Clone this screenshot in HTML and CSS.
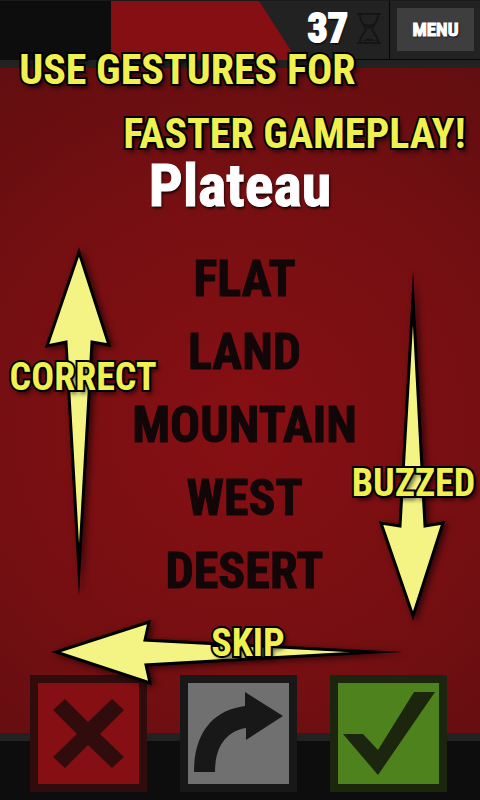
FILE: index.html
```html
<!DOCTYPE html>
<html lang="en">
<head>
<meta charset="utf-8">
<meta name="viewport" content="width=device-width, initial-scale=1">
<title>Plateau</title>
<link rel="stylesheet" href="styles.css">
</head>
<body>
<div class="game">
  <header class="topbar">
    <div class="progress"></div>
    <div class="timer">
      <span class="seconds">37</span>
      <svg class="hourglass" viewBox="0 0 26 34" aria-hidden="true">
        <path d="M1 2H25M1 31H25M4 3C4 11 10 14 10 17S4 23 4 30M22 3C22 11 16 14 16 17S22 23 22 30" fill="none" stroke="#151515" stroke-width="2"/>
        <path d="M7 11Q13 14 19 11L13 17ZM6 29Q13 24 20 29Z" fill="#151515"/>
      </svg>
    </div>
    <div class="menu-slot"><button class="menu" type="button">MENU</button></div>
  </header>
  <main class="card">
    <h1 class="word">Plateau</h1>
    <ul class="taboo">
      <li>FLAT</li>
      <li>LAND</li>
      <li>MOUNTAIN</li>
      <li>WEST</li>
      <li>DESERT</li>
    </ul>
  </main>
  <footer class="actions">
    <button class="action buzz" type="button" aria-label="Buzzed">
      <svg viewBox="0 0 101 101" aria-hidden="true"><path d="M15 27L27 16L50 39L74 16L86 27L62 51L86 74L74 85L50 62L27 85L15 74L39 51Z" fill="#300c0d"/></svg>
    </button>
    <button class="action skip" type="button" aria-label="Skip">
      <svg viewBox="0 0 101 101" aria-hidden="true"><path d="M6 89C6 50 25 27 57 23V9L95 33L58 57V45C39 48 27 63 27 89Z" fill="#181818"/></svg>
    </button>
    <button class="action correct" type="button" aria-label="Correct">
      <svg viewBox="0 0 101 101" aria-hidden="true"><path d="M5 51H25L40 67L76 9H97L40 92Z" fill="#1c260e"/></svg>
    </button>
  </footer>

  <div class="tutorial">
    <svg class="arrows" viewBox="0 0 480 800" aria-hidden="true">
      <g fill="#f4f484" stroke="#000" stroke-width="3" stroke-miterlimit="40">
        <path d="M79 252L109 345L92 342L79 570L66 342L47 346Z"/>
        <path d="M413 298L425 526L443 523L413 616L381 523L400 526Z"/>
        <path d="M56 652L149 622L145 640L375 652L146 665L150 683Z"/>
      </g>
    </svg>
    <p class="tip tip-first">USE GESTURES FOR</p>
    <p class="tip tip-second">FASTER GAMEPLAY!</p>
    <p class="tip label label-correct">CORRECT</p>
    <p class="tip label label-buzzed">BUZZED</p>
    <p class="tip label label-skip">SKIP</p>
  </div>
</div>
</body>
</html>
```
FILE: styles.css
```css
* { box-sizing: border-box; }

body {
  margin: 0;
  background: #0d0d0d;
  font-family: "Liberation Sans Narrow", "Roboto Condensed", "Open Sans Condensed", "DejaVu Sans Condensed", sans-serif;
  font-weight: 700;
}

button { font: inherit; padding: 0; border-radius: 0; }

.game {
  position: relative;
  display: flex;
  flex-direction: column;
  min-height: 100vh;
}

.topbar {
  display: flex;
  height: 68px;
  border-top: 1px solid #1a1a1a;
  border-bottom: 8px solid #222;
  background: linear-gradient(90deg, #0d0d0d 111px, #860f14 111px);
}

.progress { flex: 1; }

.timer {
  display: flex;
  align-items: center;
  justify-content: flex-end;
  gap: 8px;
  width: 130px;
  padding: 0 7px 2px 0;
  border-bottom: 1px solid #080808;
  background: #222;
  clip-path: polygon(0 0, 100% 0, 100% 100%, 38px 100%);
}

.seconds {
  color: #fff;
  font-size: 40px;
  line-height: 40px;
  -webkit-text-stroke: 2px #fff;
  text-shadow: 1px 2px 2px #000;
}

.hourglass { width: 26px; height: 34px; }

.menu-slot {
  padding: 7px 6px 7px 7px;
  border-left: 1px solid #080808;
  border-bottom: 1px solid #080808;
  background: #222;
}

.menu {
  width: 77px;
  height: 43px;
  border: 0;
  background: #3e3e3e;
  color: #fff;
  font-size: 19px;
  -webkit-text-stroke: 1px #fff;
  text-shadow: 1px 1px 2px #000;
}

.card {
  flex: 1;
  padding-top: 83px;
  background: radial-gradient(circle at 50% 54%, #870f14, #760f12 240px, #620e10 430px);
  text-align: center;
}

.word {
  margin: 0;
  color: #fff;
  font-size: 60px;
  line-height: 70px;
  -webkit-text-stroke: 1px #fff;
  text-shadow: 1px 2px 3px #000;
}

.taboo {
  margin: 22px 0 0;
  padding: 0 0 0 9px;
  list-style: none;
  color: #120708;
  font-size: 50px;
  line-height: 73px;
  -webkit-text-stroke: 1px #120708;
}

.actions {
  display: flex;
  justify-content: center;
  gap: 33px;
  padding-bottom: 8px;
  padding-right: 3px;
  border-top: 8px solid #222;
  background: #0d0d0d;
}

.action {
  width: 117px;
  height: 117px;
  margin-top: -66px;
  border: 8px solid;
}

.action svg { display: block; width: 100%; height: 100%; }

.buzz { background: #860f14; border-color: #300c0d; }
.skip { background: #707070; border-color: #181818; }
.correct { background: #4d821d; border-color: #1c260e; }

.tutorial {
  position: absolute;
  inset: 0;
  pointer-events: none;
}

.arrows {
  display: block;
  width: 100%;
  height: 100%;
  filter: drop-shadow(3px 2px 3px rgba(0, 0, 0, 0.6));
}

.tip {
  position: absolute;
  margin: 0;
  color: #f0f04e;
  font-size: 42px;
  line-height: 42px;
  white-space: nowrap;
  -webkit-text-stroke: 4px #000;
  paint-order: stroke fill;
  text-shadow: 3px 4px 4px rgba(0, 0, 0, 0.6);
}

.label { font-size: 38px; }

.tip-first { top: 49px; left: 4%; }
.tip-second { top: 113px; right: 3%; }
.label-correct { top: 356px; left: 2%; }
.label-buzzed { top: 462px; right: 1%; }
.label-skip { top: 622px; left: 44%; }
```
